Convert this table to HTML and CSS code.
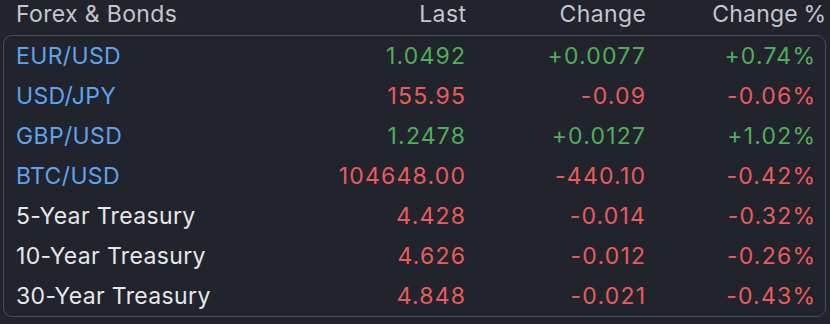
FILE: index.html
```html
<!DOCTYPE html>
<html>
<head>
<meta charset="utf-8">
<link rel="stylesheet" href="styles.css">
</head>
<body>
<div class="widget">
  <div class="row head">
    <div class="name">Forex &amp; Bonds</div>
    <div class="num">Last</div>
    <div class="num">Change</div>
    <div class="num pct">Change %</div>
  </div>
  <div class="box">
    <div class="row"><div class="name link">EUR/USD</div><div class="num up">1.0492</div><div class="num up">+0.0077</div><div class="num up">+0.74%</div></div>
    <div class="row"><div class="name link">USD/JPY</div><div class="num down">155.95</div><div class="num down">-0.09</div><div class="num down">-0.06%</div></div>
    <div class="row"><div class="name link">GBP/USD</div><div class="num up">1.2478</div><div class="num up">+0.0127</div><div class="num up">+1.02%</div></div>
    <div class="row"><div class="name link">BTC/USD</div><div class="num down">104648.00</div><div class="num down">-440.10</div><div class="num down">-0.42%</div></div>
    <div class="row"><div class="name">5-Year Treasury</div><div class="num down">4.428</div><div class="num down">-0.014</div><div class="num down">-0.32%</div></div>
    <div class="row"><div class="name">10-Year Treasury</div><div class="num down">4.626</div><div class="num down">-0.012</div><div class="num down">-0.26%</div></div>
    <div class="row"><div class="name">30-Year Treasury</div><div class="num down">4.848</div><div class="num down">-0.021</div><div class="num down">-0.43%</div></div>
  </div>
</div>
</body>
</html>
```
FILE: styles.css
```css
html, body {
  margin: 0;
  background: #21242c;
}
body {
  font-family: Inter, "Liberation Sans", sans-serif;
  font-size: 23px;
  color: #e6e7ea;
}
.widget {
  width: 830px;
  height: 324px;
  box-sizing: border-box;
}
.row {
  display: grid;
  grid-template-columns: 1fr 200px 180px 170px;
  align-items: center;
  height: 40px;
}
.head {
  grid-template-columns: 1fr 200px 180px 180px;
  height: 28px;
  padding: 0 0 0 13px;
  margin: 0 4px 7px 3px;
  color: #c3c6ce;
}
.head .num {
  letter-spacing: 0.4px;
  margin-right: -0.4px;
}
.head .pct {
  letter-spacing: 0.2px;
  word-spacing: -1px;
}
.box {
  margin: 0 4px 0 3px;
  border: 1px solid #4a4e5b;
  border-radius: 9px;
  padding: 0 10px 0 12px;
}
.name {
  letter-spacing: 0.35px;
}
.num {
  text-align: right;
}
.box .num {
  letter-spacing: 1.2px;
  margin-right: -1.2px;
}
.link { color: #5ea3ec; }
.up { color: #4fae59; }
.down { color: #e85c5c; }
```
